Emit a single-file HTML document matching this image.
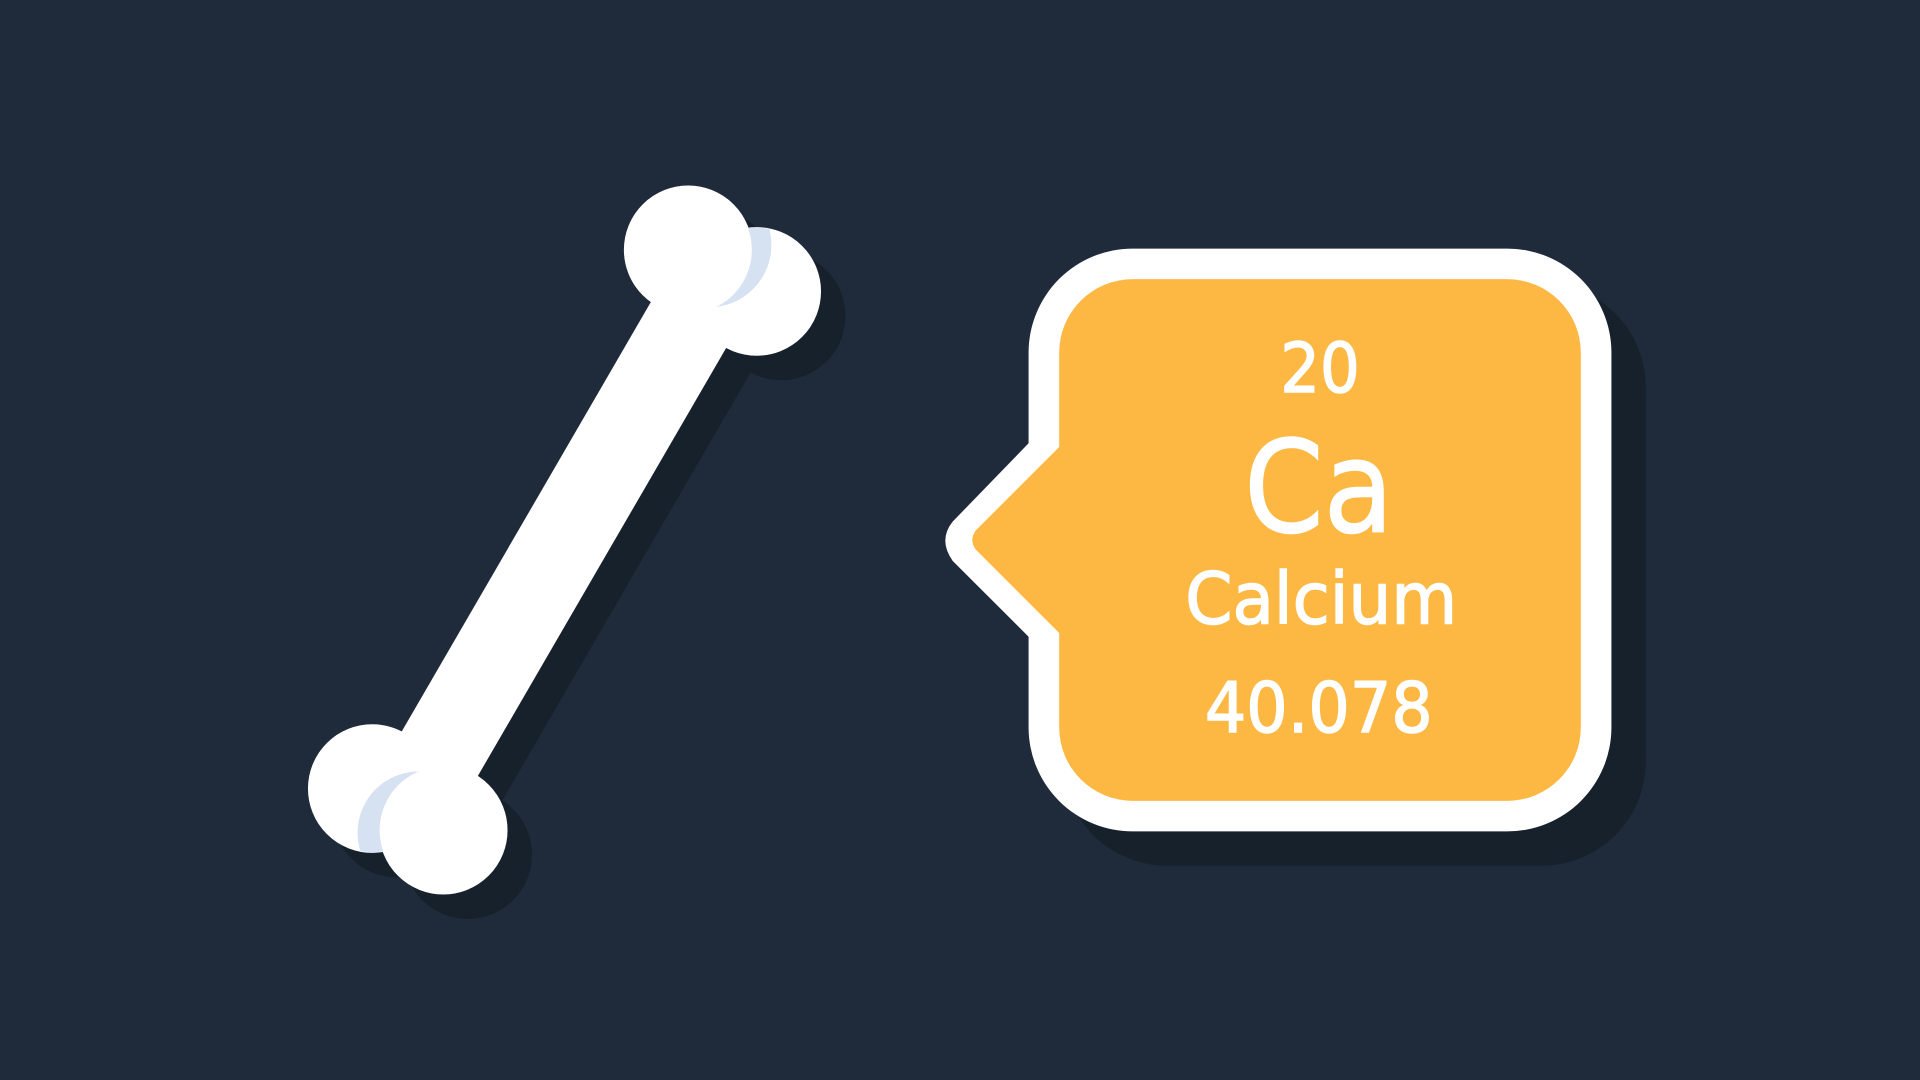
<!DOCTYPE html>
<html><head><meta charset="utf-8"><style>
html,body{margin:0;padding:0;background:#1f2b3a;width:1920px;height:1080px;overflow:hidden}
svg{display:block}
text{font-family:"DejaVu Sans","Liberation Sans",sans-serif;fill:#fff;stroke:#fff;stroke-width:1.2;text-anchor:middle}
</style></head><body>
<svg width="1920" height="1080" viewBox="0 0 1568 882" xmlns="http://www.w3.org/2000/svg">
<defs>
<g id="bone">
<circle cx="562" cy="204" r="52"/>
<circle cx="618" cy="238" r="52"/>
<circle cx="304" cy="644" r="52"/>
<circle cx="362" cy="678" r="52"/>
<line x1="584" y1="228" x2="338" y2="652" stroke-width="72"/>
</g>
<clipPath id="c1"><circle cx="618" cy="238" r="52"/></clipPath>
<clipPath id="c2"><circle cx="304" cy="644" r="52"/></clipPath>
</defs>
<rect width="1568" height="882" fill="#1f2b3a"/>
<use href="#bone" transform="translate(20,20)" fill="#17212c" stroke="#17212c"/>
<use href="#bone" fill="#fff" stroke="#fff"/>
<circle cx="579" cy="200" r="51" fill="#d6e2f1" clip-path="url(#c1)"/>
<circle cx="562" cy="204" r="52" fill="#fff"/>
<circle cx="342" cy="680" r="50" fill="#d6e2f1" clip-path="url(#c2)"/>
<circle cx="362" cy="678" r="52" fill="#fff"/>

<path transform="translate(28,28)" fill="#17212c" d="M925,203 H1231 A85,85 0 0 1 1316,288 V594 A85,85 0 0 1 1231,679 H925 A85,85 0 0 1 840,594 V520 L778,458 Q766,441 778,426 L840,362 V288 A85,85 0 0 1 925,203Z"/>
<path fill="#fff" d="M925,203 H1231 A85,85 0 0 1 1316,288 V594 A85,85 0 0 1 1231,679 H925 A85,85 0 0 1 840,594 V520 L778,458 Q766,441 778,426 L840,362 V288 A85,85 0 0 1 925,203Z"/>
<path fill="#fdb844" d="M925,228 H1231 A60,60 0 0 1 1291,288 V594 A60,60 0 0 1 1231,654 H925 A60,60 0 0 1 865,594 V517 L797,449 Q791,441 797,433 L865,365 V288 A60,60 0 0 1 925,228Z"/>

<text x="1078" y="320" font-size="56" textLength="65" lengthAdjust="spacingAndGlyphs">20</text>
<text x="1077" y="434" font-size="104" textLength="122" lengthAdjust="spacingAndGlyphs">Ca</text>
<text x="1079" y="509" font-size="58" textLength="222" lengthAdjust="spacingAndGlyphs">Calcium</text>
<text x="1077" y="598" font-size="57" textLength="186" lengthAdjust="spacingAndGlyphs">40.078</text>
</svg>
</body></html>
